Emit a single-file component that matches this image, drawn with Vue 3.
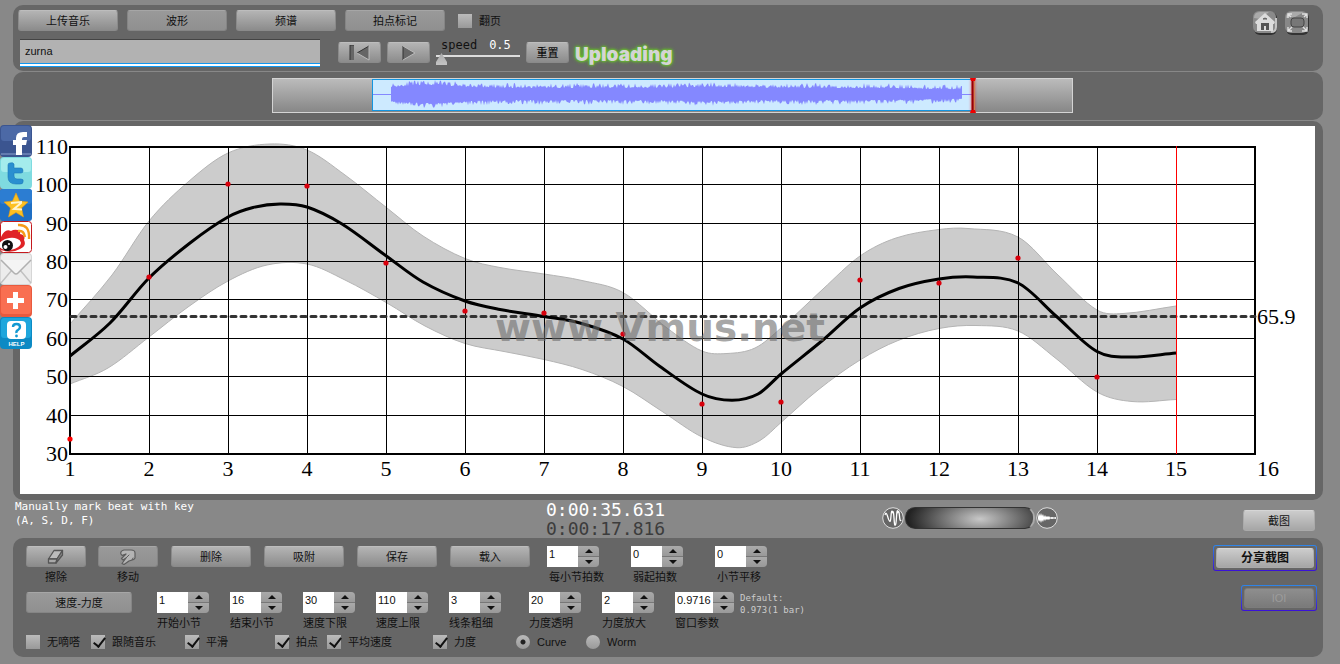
<script setup>
import { ref, reactive } from 'vue'

const views = [
  { label: '上传音乐', on: false },
  { label: '波形', on: true },
  { label: '频谱', on: false },
  { label: '拍点标记', on: true },
]
const track = ref('zurna')
const speed = ref(0.5)
const pageTurn = ref(false)
const plotMode = ref('curve')

const beatFields = reactive([
  { id: 'beats-per-bar', label: '每小节拍数', value: '1', step: 1 },
  { id: 'pickup-beats', label: '弱起拍数', value: '0', step: 1 },
  { id: 'bar-shift', label: '小节平移', value: '0', step: 1 },
])
const rangeFields = reactive([
  { id: 'start-bar', label: '开始小节', value: '1', step: 1 },
  { id: 'end-bar', label: '结束小节', value: '16', step: 1 },
  { id: 'tempo-min', label: '速度下限', value: '30', step: 1 },
  { id: 'tempo-max', label: '速度上限', value: '110', step: 1 },
  { id: 'line-width', label: '线条粗细', value: '3', step: 1 },
])
const loudnessFields = reactive([
  { id: 'loud-alpha', label: '力度透明', value: '20', step: 1 },
  { id: 'loud-zoom', label: '力度放大', value: '2', step: 1 },
  { id: 'window', label: '窗口参数', value: '0.9716', step: 0.0001, wide: true },
])
const options = reactive([
  { id: 'no-tick', label: '无嘀嗒', on: false },
  { id: 'follow', label: '跟随音乐', on: true },
  { id: 'smooth', label: '平滑', on: true },
  { id: 'show-beats', label: '拍点', on: true },
  { id: 'average', label: '平均速度', on: true },
  { id: 'loudness', label: '力度', on: true },
])

function nudge(field, sign) {
  const digits = field.step < 1 ? 4 : 0
  field.value = (Number(field.value) + sign * field.step).toFixed(digits)
}

/* Chart geometry */
const left = 50
const top = 20
const bottom = 328
const beatWidth = 79
const xAt = (beat) => left + (beat - 1) * beatWidth
const yAt = (bpm) => Math.round(bottom - (bpm - 30) * 3.84)
const tempos = [110, 100, 90, 80, 70, 60, 50, 40, 30]
const beats = Array.from({ length: 16 }, (_, i) => i + 1)
const dots = [34, 76, 100.3, 99.9, 79.7, 67.2, 66.6, 61.3, 43, 43.6, 75.4, 74.5, 81, 50]

const middle = [
  [50, 230], [90, 197], [129, 152], [170, 117], [208, 91], [233, 81.5], [260, 78], [287, 81], [322, 98],
  [367, 130.5], [403, 156], [445, 175], [480, 183.5], [524, 190.5], [560, 197], [603, 213], [640, 240.5],
  [682, 268], [712, 274.3], [738, 268], [761, 248], [803, 214], [840, 182], [879, 162.5], [919, 153],
  [953, 151], [998, 157], [1036, 190], [1077, 225.5], [1110, 231], [1156, 227],
]
const upper = [
  [50, 198], [92, 149], [129, 95], [168, 56], [208, 27], [250, 18], [287, 24], [325, 49], [367, 82], [403, 110],
  [445, 132.5], [480, 141.5], [524, 148], [562, 154.5], [603, 166.5], [647, 202], [682, 225], [707, 227.5],
  [735, 222], [761, 202], [803, 163], [840, 130], [876, 112], [919, 103.5], [948, 102.5], [998, 111],
  [1038, 149], [1077, 184], [1103, 187.5], [1156, 180],
]
const lower = [
  [50, 258], [88, 242], [129, 211], [168, 181], [208, 155], [247, 139], [287, 138], [325, 154], [367, 177],
  [405, 200], [445, 217.5], [484, 225.5], [524, 233.5], [562, 243.5], [603, 260.5], [643, 286], [682, 311],
  [717, 321.7], [740, 314.5], [761, 296.5], [798, 264], [840, 234], [878, 214.5], [919, 202.5], [956, 199.5],
  [998, 205], [1036, 232.5], [1077, 266], [1112, 275.5], [1156, 273.5],
]

/* Smooth cubic segments through every point */
function spline(points) {
  let d = ''
  for (let i = 0; i < points.length - 1; i++) {
    const a = points[i - 1] || points[i]
    const b = points[i]
    const c = points[i + 1]
    const e = points[i + 2] || c
    const span = c[0] - b[0]
    const sb = (c[1] - a[1]) / (c[0] - a[0])
    const sc = (e[1] - b[1]) / (e[0] - b[0])
    d += ` C${b[0] + span / 3} ${b[1] + (sb * span) / 3} ${c[0] - span / 3} ${c[1] - (sc * span) / 3} ${c[0]} ${c[1]}`
  }
  return d
}
const start = (p) => `${p[0][0]} ${p[0][1]}`
const reversedLower = [...lower].reverse()
const curvePath = `M${start(middle)}${spline(middle)}`
const upperPath = `M${start(upper)}${spline(upper)}`
const lowerPath = `M${start(lower)}${spline(lower)}`
const bandPath = `${upperPath} L${start(reversedLower)}${spline(reversedLower)} Z`

/* Waveform outline: loud near the start, level afterwards */
function waveform() {
  let seed = 11
  const random = () => {
    seed = (seed * 16807) % 2147483647
    return seed / 2147483647
  }
  const tops = []
  const bottoms = []
  for (let x = 119; x <= 690; x++) {
    const swell = 3 * Math.exp(-(((x - 158) / 35) ** 2)) + Math.exp(-(((x - 440) / 40) ** 2))
    const fade = x > 600 ? (x - 600) / 60 : 0
    const base = 6 + swell - fade
    tops.push(`${x} ${(16 - base - random() ** 2 * 5).toFixed(1)}`)
    bottoms.push(`${x} ${(16 + base + random() ** 2 * 5).toFixed(1)}`)
  }
  return `M${tops.join('L')}L${bottoms.reverse().join('L')}Z`
}
const wavePath = waveform()
</script>

<template>
  <div class="page">
    <header class="panel top">
      <div class="top-left">
        <div class="row views">
          <button v-for="v in views" :key="v.label" class="btn w100" :class="{ on: v.on }">{{ v.label }}</button>
          <label class="check page-turn"><input v-model="pageTurn" type="checkbox" /><span>翻页</span></label>
        </div>
        <div class="row player">
          <input v-model="track" class="track" type="text" aria-label="Track" />
          <div class="row transport">
            <button class="btn w43" aria-label="Rewind">
              <svg width="22" height="16" viewBox="0 0 22 16">
                <path d="M1 0h4v15h-4z" fill="#666" /><path d="M1 15V0h4" fill="none" stroke="#333" />
                <path d="M20 1v14L8 8z" fill="#666" /><path d="M20 1L8 8" stroke="#333" /><path d="M20 1v14L8 8" fill="none" stroke="#bbb" />
              </svg>
            </button>
            <button class="btn w43" aria-label="Play">
              <svg width="16" height="16" viewBox="0 0 16 16">
                <path d="M2 1v14l12-7z" fill="#666" /><path d="M2 15V1" stroke="#333" /><path d="M2 1l12 7-12 7" fill="none" stroke="#bbb" />
              </svg>
            </button>
            <div class="speed">
              <div class="speed-text"><label for="speed">speed</label><output for="speed">0.5</output></div>
              <input id="speed" v-model="speed" type="range" min="0.5" max="2" step="0.1" />
            </div>
            <button class="btn w43 reset">重置</button>
            <strong class="uploading">Uploading</strong>
          </div>
        </div>
      </div>
      <nav class="row corner">
        <button class="round" aria-label="Home">
          <svg width="26" height="26" viewBox="0 0 26 26">
            <rect x="2" y="2" width="23" height="23" rx="6" fill="#333" />
            <rect x="1" y="1" width="23" height="22" rx="6" fill="#8a8a8a" />
            <path d="M2 8q0-6 6-6h9l-8 7z" fill="#aaa" />
            <path d="M19 22q5 0 5-5V8" fill="none" stroke="#c4c4c4" stroke-width="2" />
            <path d="M13 3l10 9-1 2h-1v7H5v-7H4l-1-2z" fill="#dcdcdc" />
            <path d="M9 20v-7h8v7h-3v-4h-2v4z" fill="#555" /><path d="M11 9l2-1 2 1z" fill="#666" stroke="#666" />
          </svg>
        </button>
        <button class="round" aria-label="Full screen">
          <svg width="26" height="26" viewBox="0 0 26 26">
            <rect x="2" y="2" width="23" height="23" rx="6" fill="#333" />
            <rect x="1" y="1" width="23" height="22" rx="6" fill="#888" />
            <path d="M2 8q0-6 6-6h12l-9 5H6z" fill="#aaa" />
            <rect x="7" y="8" width="13" height="9" rx="3" fill="#777" stroke="#444" />
            <path d="M8 4H4v4M4 4l3 3M18 4h5v4M23 4l-3 3M8 21H4v-4M4 21l4-4M18 21h5v-4M23 21l-4-4" fill="none" stroke="#e0e0e0" stroke-width="1.4" />
          </svg>
        </button>
      </nav>
    </header>

    <section class="panel overview">
      <svg class="strip" viewBox="0 0 801 35" role="img" aria-label="Waveform overview">
        <defs>
          <linearGradient id="strip-bg" x1="0" y1="0" x2="0" y2="1">
            <stop offset="0" stop-color="#bcbcbc" /><stop offset="1" stop-color="#868686" />
          </linearGradient>
          <filter id="glow" x="-4" y="-0.2" width="9" height="1.4"><feGaussianBlur stdDeviation="1.5" /></filter>
        </defs>
        <rect x="0.5" y="0.5" width="800" height="34" fill="url(#strip-bg)" stroke="#d4d4d4" />
        <rect x="100.5" y="1.5" width="600" height="31" fill="#cdeaff" stroke="#1495e0" />
        <path d="M101 16.500H119M690 16.500H700" stroke="#8488ff" />
        <path :d="wavePath" fill="#8488ff" />
        <rect x="699" y="1" width="4" height="33" fill="#f00" opacity="0.5" filter="url(#glow)" />
        <path d="M700.500 1V34" stroke="#900" stroke-width="2" />
        <path d="M702.500 1V34" stroke="#d08050" />
        <path d="M698 0h6l-1 3h-4zM698 35h6l-1-3h-4z" fill="#e00" />
      </svg>
    </section>

    <section class="panel chart">
      <svg viewBox="0 0 1295 368" role="img" aria-label="Tempo curve">
        <rect width="1295" height="368" fill="#fff" />
        <path :d="bandPath" fill="#ccc" />
        <path :d="upperPath" fill="none" stroke="#b4b4b4" />
        <path :d="lowerPath" fill="none" stroke="#b4b4b4" />
        <g stroke="#000" shape-rendering="crispEdges">
          <line v-for="t in tempos.slice(1, -1)" :key="t" :x1="left" x2="1235" :y1="yAt(t) - 0.5" :y2="yAt(t) - 0.5" />
          <line v-for="b in beats.slice(1, -1)" :key="b" :x1="xAt(b) + 0.5" :x2="xAt(b) + 0.5" :y1="top" :y2="bottom" :class="{ now: b === 15 }" />
          <rect x="50" y="21" width="1185" height="307" fill="none" stroke-width="2" />
        </g>
        <line x1="51" x2="1235" y1="190.500" y2="190.500" class="mean" />
        <path :d="curvePath" fill="none" stroke="#000" stroke-width="3" />
        <line :x1="xAt(15) + 0.5" :x2="xAt(15) + 0.5" :y1="top" :y2="bottom" class="now" shape-rendering="crispEdges" />
        <circle v-for="(v, i) in dots" :key="i" :cx="xAt(i + 1)" :cy="yAt(v)" r="2.600" :fill="i ? '#d8000c' : '#f00'" />
        <g class="axis">
          <text v-for="t in tempos" :key="t" x="48" :y="yAt(t) + 7" text-anchor="end">{{ t }}</text>
          <text v-for="b in beats" :key="b" :x="b === 16 ? 1248 : xAt(b)" y="350" text-anchor="middle">{{ b }}</text>
          <text x="1237" y="198">65.9</text>
        </g>
        <text x="475" y="215" class="watermark">www.Vmus.net</text>
      </svg>
    </section>

    <section class="status">
      <p class="hint">Manually mark beat with key<br />(A, S, D, F)</p>
      <div class="times"><div>0:00:35.631</div><div class="dim">0:00:17.816</div></div>
      <div class="row wheel-group">
        <svg width="22" height="22" viewBox="0 0 22 22">
          <circle cx="11" cy="11" r="10.300" fill="#666" stroke="#ddd" />
          <path d="M3 8Q4 4 5.500 9T7.500 14Q8.500 16 9 9T10.500 5Q11.500 3 12 11T13 18Q14 19 14.500 10T16 5Q17 3 17.500 9T19 13" fill="none" stroke="#fff" stroke-width="1.300" />
        </svg>
        <div class="wheel"></div>
        <svg width="22" height="22" viewBox="0 0 22 22">
          <circle cx="11" cy="11" r="10.300" fill="#666" stroke="#ddd" />
          <path d="M2 10L3 6 4 9 5 6 6 9 7 7 8 10 9 8 10 10 11 9 12 10 13 9 14 10.500 16 10 18 10.500 20 10V12L18 11.500 16 12 14 11.500 13 13 12 12 11 13 10 12 9 14 8 12 7 15 6 13 5 16 4 13 3 15 2 12z" fill="#fff" />
        </svg>
      </div>
      <button class="btn light w72">截图</button>
    </section>

    <section class="panel controls">
      <div class="left-controls">
        <div class="row beat-line">
          <div class="row tools">
            <div class="tool">
              <button id="erase" class="btn w60" aria-label="擦除">
                <svg width="18" height="16" viewBox="0 0 18 16" stroke-linejoin="round">
                  <path d="M1.500 10L7 1.500h8.500L10 10z" fill="#bbb" stroke="#555" stroke-width="1.300" />
                  <path d="M1.500 10v4H9l1-4z" fill="#a8a8a8" stroke="#555" stroke-width="1.300" />
                  <path d="M9 14l6.500-8V1.500L10 10z" fill="#888" stroke="#555" stroke-width="1.300" />
                </svg>
              </button>
              <label for="erase">擦除</label>
            </div>
            <div class="tool">
              <button id="move" class="btn on w60" aria-label="移动">
                <svg width="18" height="16" viewBox="0 0 18 16" stroke-linejoin="round" stroke-linecap="round">
                  <path d="M2 5Q1 2 5 1L12 1Q16 1 16 4V9Q15 11 13 11L10 12 5 15.500 3 14.500 7 9 4 11 2.500 9.500 7 5 4 6Q3 7 2 5z" fill="#b4b4b4" stroke="#5c5c5c" stroke-width="1.200" />
                  <path d="M7 9l3-3M13 11l1-2" fill="none" stroke="#5c5c5c" />
                </svg>
              </button>
              <label for="move">移动</label>
            </div>
          </div>
          <div class="row actions">
            <button class="btn w80">删除</button>
            <button class="btn w80">吸附</button>
            <button class="btn w80">保存</button>
            <button class="btn w80">载入</button>
          </div>
          <div class="row beat-fields">
            <div v-for="f in beatFields" :key="f.id" class="field">
              <div class="spin">
                <input :id="f.id" v-model="f.value" type="text" />
                <span class="steps">
                  <button :aria-label="f.label + ' +'" @click="nudge(f, 1)"><i class="up"></i></button>
                  <button :aria-label="f.label + ' -'" @click="nudge(f, -1)"><i class="down"></i></button>
                </span>
              </div>
              <label :for="f.id">{{ f.label }}</label>
            </div>
          </div>
        </div>

        <div class="row range-line">
          <button class="btn on w106">速度-力度</button>
          <div v-for="(group, g) in [rangeFields, loudnessFields]" :key="g" class="row range-fields">
            <div v-for="f in group" :key="f.id" class="field" :class="{ wide: f.wide }">
              <div class="spin">
                <input :id="f.id" v-model="f.value" type="text" />
                <span class="steps">
                  <button :aria-label="f.label + ' +'" @click="nudge(f, 1)"><i class="up"></i></button>
                  <button :aria-label="f.label + ' -'" @click="nudge(f, -1)"><i class="down"></i></button>
                </span>
              </div>
              <label :for="f.id">{{ f.label }}</label>
            </div>
          </div>
          <p class="default">Default:<br />0.973(1 bar)</p>
        </div>

        <div class="options">
          <label v-for="o in options" :key="o.id" class="check"><input v-model="o.on" type="checkbox" /><span>{{ o.label }}</span></label>
          <label class="check"><input v-model="plotMode" type="radio" name="plot" value="curve" /><span>Curve</span></label>
          <label class="check"><input v-model="plotMode" type="radio" name="plot" value="worm" /><span>Worm</span></label>
        </div>
      </div>
      <div class="right-controls">
        <div class="ring"><button class="btn light share">分享截图</button></div>
        <div class="ring"><button class="btn off w70" disabled>IOI</button></div>
      </div>
    </section>

    <aside class="social">
      <a href="#" aria-label="Facebook">
        <svg viewBox="0 0 32 32"><rect width="32" height="32" rx="4" fill="#3b5590" /><rect x="1" y="1" width="30" height="15" rx="3" fill="#4c69a6" /><path d="M1 29h30" stroke="#8da3cf" stroke-width="1" /><path d="M16 30V20h-3v-5h3v-2q0-6 7-6h4v5h-3q-2 0-2 2v1h5l-1 5h-4v10z" fill="#fff" /></svg>
      </a>
      <a href="#" aria-label="Twitter">
        <svg viewBox="0 0 32 32"><rect width="32" height="32" rx="4" fill="#7fdbe0" /><rect x="1" y="1" width="30" height="14" rx="3" fill="#a4ecec" /><path d="M10 6q3-1 4 1v4h7q2 0 2 3 0 2-2 2h-7v3q0 3 3 3h4q3 0 2 3 0 2-3 2h-4q-8 0-8-7V8q0-2 2-2z" fill="#2a8fd0" stroke="#1b78b8" stroke-width="0.600" /></svg>
      </a>
      <a href="#" aria-label="Qzone">
        <svg viewBox="0 0 32 32"><rect width="32" height="32" rx="3" fill="#1f6fc4" /><rect width="32" height="15" rx="3" fill="#2c7dd2" /><path d="M16 4l3.500 8 8.500 1-6.500 6 2 9-7.500-4.500L8.500 28l2-9L4 13l8.500-1z" fill="#fdc021" stroke="#e79a10" stroke-width="0.600" /><path d="M11 14l10-1v1l-7 6 8 .5" fill="none" stroke="#fff4d0" stroke-width="2" /></svg>
      </a>
      <a href="#" aria-label="Weibo">
        <svg viewBox="0 0 32 32"><rect x="0.500" y="0.500" width="31" height="31" rx="3" fill="#fff" stroke="#c4191e" /><path d="M1 16q4-9 10-6 3-2 7-1 3 0 2 4 6 1 4 6 3 6-4 9-9 5-19 1z" fill="#e02326" /><ellipse cx="10" cy="23" rx="11" ry="6" fill="#fff" transform="rotate(-8 10 23)" /><circle cx="7.500" cy="24.500" r="5.500" fill="#111" /><circle cx="5.500" cy="26" r="2" fill="#fff" /><circle cx="9" cy="23" r="1" fill="#fff" /><path d="M18 10q6-1 7 6M18 4q12-1 11 14" fill="none" stroke="#f59b1b" stroke-width="2.400" /></svg>
      </a>
      <a href="#" aria-label="Mail">
        <svg viewBox="0 0 32 32"><rect width="32" height="32" rx="4" fill="#d6d6d6" /><rect x="1" y="1" width="30" height="30" rx="3" fill="#ececec" /><path d="M1 30L12 17M31 30L20 17" stroke="#c2c2c2" stroke-width="1.500" /><path d="M1 7l13 13q2 2 4 0L31 7" fill="#f4f4f4" stroke="#b0b0b0" stroke-width="1.500" /></svg>
      </a>
      <a href="#" aria-label="Share">
        <svg viewBox="0 0 32 32"><rect width="32" height="32" rx="4" fill="#e85a3e" /><rect x="1" y="1" width="30" height="28" rx="3" fill="#f96f51" /><path d="M13 7h5v6h6v5h-6v6h-5v-6H7v-5h6z" fill="#fff" /></svg>
      </a>
      <a href="#" aria-label="Help">
        <svg viewBox="0 0 32 32"><rect width="32" height="32" rx="4" fill="#0c8ac4" /><rect x="1" y="1" width="30" height="20" rx="3" fill="#1ea6dc" /><rect x="7" y="4" width="19" height="18" rx="4" fill="#fff" /><path d="M13 10q0-3 3.500-3t3.500 3q0 2-2 3t-1.500 3" fill="none" stroke="#1299d2" stroke-width="2.400" /><circle cx="16.500" cy="19" r="1.400" fill="#1299d2" /><text x="16.500" y="29" class="help">HELP</text></svg>
      </a>
    </aside>
  </div>
</template>

<style>
body { margin: 0; background: #888; }
</style>

<style scoped>
.page {
  position: relative;
  display: flex;
  flex-direction: column;
  padding: 5px 17px 7px 13px;
  background: #888;
  color: #111;
  font: 11px/14px "Liberation Sans", "Noto Sans CJK SC", sans-serif;
}
.page * { box-sizing: border-box; }
button, input { font: inherit; color: inherit; margin: 0; }
p { margin: 0; }
.row { display: flex; }
.panel { background: #666; border-radius: 10px; }
.btn {
  display: flex;
  align-items: center;
  justify-content: center;
  height: 21px;
  padding: 0;
  border: 1px solid #8a8a8a;
  border-top-color: #bdbdbd;
  border-radius: 3px;
  background: linear-gradient(#b4b4b4, #8c8c8c);
  white-space: nowrap;
}
.btn.on { background: linear-gradient(#999, #909090); border-color: #858585; border-top-color: #a6a6a6; }
.btn.light { background: linear-gradient(#ccc, #a6a6a6); border-color: #aaa; border-top-color: #d6d6d6; }
.btn.off { background: linear-gradient(#8e8e8e, #7a7a7a); border-color: #7c7c7c; color: #9c9c9c; }
.w43 { width: 43px; }
.w60 { width: 60px; }
.w70 { width: 70px; }
.w72 { width: 72px; }
.w80 { width: 80px; }
.w100 { width: 100px; }
.w106 { width: 106px; }

.top { display: flex; justify-content: space-between; padding: 5px 13px 4px 5px; }
.top-left { display: flex; flex-direction: column; gap: 8px; }
.views { gap: 9px; align-items: center; }
.page-turn { margin-left: 4px; }
.player { gap: 18px; padding-left: 2px; }
.track {
  width: 300px;
  height: 28px;
  padding: 0 5px 4px;
  border: 0;
  border-top: 1px solid #444;
  border-bottom: 1px solid #1298f0;
  background: linear-gradient(#b2b2b2 0 23px, #1298f0 23px 24px, #fff 24px);
  outline: 0;
}
.transport { align-items: center; gap: 6px; padding-bottom: 1px; }
.speed { width: 84px; align-self: flex-start; }
.speed-text { display: flex; gap: 12px; padding-left: 5px; font: 12px/12px "DejaVu Sans Mono", monospace; }
.speed-text output { color: #fff; }
.speed input {
  display: block;
  width: 100%;
  height: 12px;
  margin-top: 2px;
  appearance: none;
  background: linear-gradient(transparent 2px, #ddd 2px 4px, transparent 4px);
}
.speed input::-webkit-slider-thumb {
  appearance: none;
  width: 11px;
  height: 12px;
  background: linear-gradient(#aaa, #c4c4c4);
  clip-path: polygon(50% 0, 100% 75%, 100% 100%, 0 100%, 0 75%);
}
.reset { font-weight: 500; }
.uploading {
  padding-top: 4px;
  font: 900 19px/22px Inter, "DejaVu Sans", sans-serif;
  color: #d4d4d4;
  text-shadow: 0 0 2px #6c2, 0 0 3px #6c2, 0 0 4px #6c2;
}
.corner { gap: 6px; align-items: flex-start; }
.round { width: 26px; height: 26px; padding: 0; border: 0; background: none; }
.round svg { display: block; }

.overview { display: flex; justify-content: center; margin-top: 1px; padding: 6px 0 7px 9px; }
.strip { display: block; width: 801px; }

.chart { margin-top: 1px; padding: 5px 8px 6px 7px; }
.chart svg { display: block; width: 100%; }
.axis { font: 22px "Liberation Serif", serif; fill: #000; }
.now { stroke: #f00; }
.mean { stroke: #333; stroke-width: 3; stroke-dasharray: 5 5; stroke-linecap: round; }
.watermark { font: bold 39px "DejaVu Sans", sans-serif; fill: #6c6c6c; fill-opacity: 0.6; }

.status {
  display: grid;
  grid-template-columns: 533fr 336fr 361fr 72px;
  height: 38px;
  padding-right: 8px;
}
.hint { padding-left: 2px; color: #fff; font: 11px/14px "DejaVu Sans Mono", monospace; }
.times { color: #fff; font: 18px/19px "DejaVu Sans Mono", monospace; }
.dim { color: #3c3c3c; }
.wheel-group { align-items: center; gap: 1px; padding-bottom: 2px; }
.wheel {
  width: 130px;
  height: 22px;
  border: 1px solid #333;
  border-right: 2px solid #aaa;
  border-radius: 10px;
  background: radial-gradient(ellipse 72px 30px at 74px 11px, #c8c8c8, #222);
}
.status .btn { align-self: center; margin-top: 3px; }

.controls { display: flex; justify-content: space-between; padding: 7px 6px 8px 13px; }
.left-controls { display: flex; flex-direction: column; }
.beat-line { align-items: flex-start; height: 47px; padding-top: 1px; }
.range-line { align-items: flex-start; height: 43px; }
.tools { gap: 12px; }
.tool { display: flex; flex-direction: column; align-items: center; gap: 3px; }
.actions { gap: 13px; margin-left: 13px; }
.beat-fields { gap: 32px; margin-left: 17px; }
.beat-fields label { padding-left: 2px; }
.range-fields { gap: 21px; margin-left: 25px; }
.range-fields + .range-fields { margin-left: 28px; }
.field { display: flex; flex-direction: column; gap: 3px; width: 52px; white-space: nowrap; }
.field.wide { width: 59px; }
.spin { display: flex; height: 21px; }
.spin input {
  flex: 1;
  min-width: 0;
  height: 21px;
  padding: 0 0 5px 2px;
  border: 0;
  background: #fff;
}
.steps { display: flex; flex-direction: column; gap: 1px; width: 21px; background: #777; border-radius: 0 4px 4px 0; overflow: hidden; }
.steps button {
  display: flex;
  flex: 1;
  align-items: center;
  justify-content: center;
  padding: 0;
  border: 0;
  background: linear-gradient(#aaa, #999);
}
.up, .down { border: 4px solid transparent; }
.up { border-top: 0; border-bottom: 4px solid #111; }
.down { border-bottom: 0; border-top: 4px solid #111; }
.default { margin-left: 6px; color: #ccc; font: 9px/12px "DejaVu Sans Mono", monospace; }

.options { display: grid; grid-template-columns: 65px 94px 90px 52px 106px 83px 70px auto; }
.check { display: flex; align-items: center; gap: 7px; height: 14px; white-space: nowrap; }
.check input { position: relative; appearance: none; width: 14px; height: 14px; background: linear-gradient(#bbb, #999); }
.check input[type="checkbox"]:checked::after {
  content: "";
  position: absolute;
  left: 5px;
  top: 0;
  width: 5px;
  height: 10px;
  border: solid #111;
  border-width: 0 2px 2px 0;
  transform: rotate(38deg);
}
.check input[type="radio"] { border-radius: 50%; }
.check input[type="radio"]:checked { background: radial-gradient(circle, #222 0 2px, transparent 3px), linear-gradient(#bbb, #999); }

.right-controls { display: flex; flex-direction: column; align-items: flex-end; gap: 14px; }
.ring { padding: 2px; border-radius: 3px; background: linear-gradient(#666, #666) padding-box, linear-gradient(#2e86e8, #3a10d8) border-box; border: 1px solid transparent; }
.ring .btn { height: 20px; }
.share { width: 98px; font-size: 12px; font-weight: 700; }

.social { position: absolute; left: 0; top: 125px; display: flex; flex-direction: column; width: 32px; }
.social a { height: 32px; }
.social svg { display: block; width: 32px; height: 32px; }
.help { font: bold 6px "Liberation Sans", sans-serif; fill: #fff; text-anchor: middle; }
</style>
